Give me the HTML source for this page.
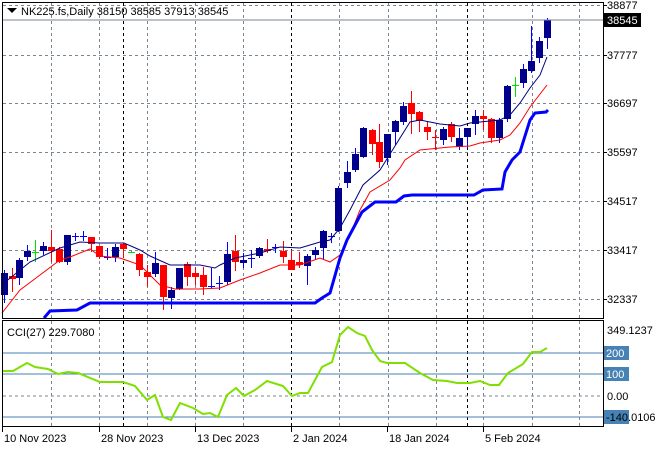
<!DOCTYPE html>
<html><head><meta charset="utf-8"><style>
html,body{margin:0;padding:0;background:#fff;}
svg{display:block;font-family:"Liberation Sans",sans-serif;font-size:11px;}
</style></head><body>
<svg id="s" width="660" height="450" xmlns="http://www.w3.org/2000/svg">
<rect width="660" height="450" fill="#fff"/>
<g id="grid" stroke="#7a8592" stroke-dasharray="3,3" stroke-width="1"></g>
<g id="cdl"></g>
<polyline fill="none" stroke="#000080" stroke-width="1" points="2,287 4,283 30,262 60,248 80,242 100,243 124,243 140,250 150,256 170,265 200,265 215,268 220,265 235,258 260,253 280,247 300,248 320,242 330,240 340,228 350,210 363,185 380,170 395,146 410,122 420,120 440,124 460,126 470,123 500,120 510,115 520,103 530,88 540,75 547,57"/>
<polyline fill="none" stroke="#ff0000" stroke-width="1" points="2,313 20,290 40,275 60,260 70,257 90,249 100,256 120,258 140,265 160,285 175,289 200,289 220,288 240,280 260,273 280,265 300,265 320,258 330,262 340,255 350,235 360,210 370,192 390,180 400,168 405,160 420,150 450,147 470,146 480,143 500,140 510,135 520,123 530,107 547,85"/>
<polyline fill="none" stroke="#0000ff" stroke-width="3" points="44,318 50,311 77,310 90,303 315,303 322,298 330,293 340,258 347,240 362,212 375,202 396,202 404,196 412,195 474,195 483,190 502,189 505,172 512,160 520,152 530,120 535,113 546,112 548,110"/>
<line x1="2" y1="20" x2="603" y2="20" stroke="#7a8592"/>
<rect x="2.5" y="2.5" width="601" height="316" fill="none" stroke="#000"/>
<path d="M7 8 L17 8 L12 13 Z" fill="#000"/>
<text x="21" y="15" fill="#000">NK225.fs,Daily  38150 38585 37913 38545</text>
<g id="ax" fill="#000"></g>
<rect x="604" y="13" width="37" height="14" fill="#000"/>
<text x="607" y="24" fill="#fff">38545</text>
<rect x="2.5" y="320.5" width="601" height="106" fill="none" stroke="#000"/>
<line x1="3" y1="353" x2="603" y2="353" stroke="#4682b4"/>
<line x1="3" y1="374" x2="603" y2="374" stroke="#4682b4"/>
<line x1="3" y1="417" x2="603" y2="417" stroke="#4682b4"/>
<line x1="3" y1="396" x2="603" y2="396" stroke="#7a8592" stroke-dasharray="3,3"/>
<polyline fill="none" stroke="#7fe000" stroke-width="2" points="3,371 13,371 27,363 35,367 48,369 58,374 68,372 78,373 100,382 123,382 135,386 147,400 155,395 163,417 171,420 180,403 193,408 203,414 210,413 218,417 227,395 236,388 244,396 255,390 267,381 283,386 292,396 300,393 308,393 322,367 332,362 340,335 348,327 357,333 365,336 372,350 380,361 387,363 405,363 420,373 433,380 447,381 457,383 470,383 480,381 490,385 499,385 508,373 523,364 532,352 540,352 547,348"/>
<text x="7" y="336" fill="#000">CCI(27) 229.7080</text>
<text x="607" y="334" fill="#000">349.1237</text>
<rect x="604" y="346" width="25" height="14" fill="#4682b4"/><text x="606" y="357" fill="#fff">200</text>
<rect x="604" y="367" width="25" height="14" fill="#4682b4"/><text x="606" y="378" fill="#fff">100</text>
<text x="607" y="400" fill="#000">0.00</text>
<rect x="604" y="410" width="25" height="14" fill="#4682b4"/><text x="606" y="421" fill="#000">-140.0106</text>
<g id="dt" fill="#000"></g>
</svg>
<script>
var NS="http://www.w3.org/2000/svg";
function el(p,t,a,txt){var e=document.createElementNS(NS,t);for(var k in a)e.setAttribute(k,a[k]);if(txt)e.textContent=txt;document.getElementById(p).appendChild(e);return e;}
var hy=[5,55,103,152,201,250,299],lab=["38877","37777","36697","35597","34517","33417","32337"];
hy.forEach(function(y,i){el("grid","line",{x1:3,y1:y+.5,x2:603,y2:y+.5});el("ax","line",{x1:603,y1:y+.5,x2:607,y2:y+.5,stroke:"#000"});el("ax","text",{x:607,y:y+4},lab[i]);});
[51,99,147,195,243,339,388,436,483,532,579].forEach(function(x){el("grid","line",{x1:x+.5,y1:3,x2:x+.5,y2:318});el("grid","line",{x1:x+.5,y1:321,x2:x+.5,y2:426});});
[123,291,467].forEach(function(x){el("grid","line",{x1:x+.5,y1:3,x2:x+.5,y2:318,stroke:"#000"});el("grid","line",{x1:x+.5,y1:321,x2:x+.5,y2:426,stroke:"#000"});});
var C=[[4,"b",273,295,270,303],[12,"r",276,279,268,292],[19,"b",260,278,258,285],[27,"b",251,257,245,261],[35,"g",252,252,240,262],[43,"b",246,251,242,255],[51,"r",247,251,230,262],[59,"r",249,262,247,263],[67,"b",235,262,235,265],[75,"b",236,237,233,241],[83,"b",236,237,231,241],[91,"r",237,244,237,252],[99,"r",246,257,246,259],[107,"b",257,258,248,260],[115,"b",247,257,244,262],[123,"r",244,249,243,258],[131,"g",252,252,251,253],[139,"r",254,270,253,276],[147,"r",272,277,265,287],[155,"b",263,274,252,277],[163,"r",265,297,265,310],[171,"b",290,298,287,309],[179,"b",268,289,268,290],[187,"r",264,277,262,286],[195,"r",273,277,267,285],[203,"r",275,287,267,295],[211,"b",286,287,268,288],[219,"b",283,284,276,290],[227,"b",254,282,242,285],[235,"r",251,262,235,271],[243,"b",260,263,253,268],[251,"b",258,259,250,268],[259,"b",248,256,247,258],[267,"r",249,251,239,253],[275,"b",247,248,244,253],[283,"r",251,257,241,263],[291,"r",260,270,250,270],[299,"r",262,265,252,268],[307,"b",256,266,254,285],[315,"b",250,255,247,260],[323,"b",231,248,230,260],[331,"b",236,237,233,243],
[338,"b",188,231,186,232],[347,"b",172,183,161,188],[355,"b",154,170,148,172],[363,"b",128,157,127,158],[372,"r",130,144,129,155],[379,"r",142,162,124,168],[387,"b",134,158,134,165],[395,"b",121,132,120,145],[403,"b",106,122,102,125],[411,"r",103,114,91,134],[419,"r",112,121,111,132],[427,"r",127,132,121,140],[435,"r",137,138,130,150],[443,"b",129,140,127,145],[451,"r",124,137,122,142],[459,"b",138,147,128,150],[467,"b",128,137,128,148],[475,"b",116,124,110,135],[483,"r",116,119,110,130],[491,"r",119,138,118,143],[499,"b",120,138,118,143],[507,"b",86,119,85,122],[515,"g",85,85,77,97],[523,"b",69,83,64,88],[531,"b",61,71,26,73],[539,"b",41,58,37,63],[547,"b",20,38,18,49]];
C.forEach(function(c){var col=c[1]=="b"?"#00008b":c[1]=="r"?"#ff0000":"#00e000";var x=c[0];
el("cdl","line",{x1:x+.5,y1:c[4],x2:x+.5,y2:c[5],stroke:c[1]=="b"?"#0000ff":col});
var h=c[3]-c[2];if(h<2){el("cdl","line",{x1:x-3,y1:c[2]+.5,x2:x+4,y2:c[2]+.5,stroke:c[1]=="b"?"#0000ff":col});}
else el("cdl","rect",{x:x-3,y:c[2],width:7,height:h,fill:col});});
var D=[[2,"10 Nov 2023"],[99,"28 Nov 2023"],[195,"13 Dec 2023"],[291,"2 Jan 2024"],[387,"18 Jan 2024"],[483,"5 Feb 2024"]];
D.forEach(function(d){el("dt","line",{x1:d[0]+.5,y1:427,x2:d[0]+.5,y2:432,stroke:"#000"});el("dt","text",{x:d[0]+2,y:442},d[1]);});
</script>
</body></html>
